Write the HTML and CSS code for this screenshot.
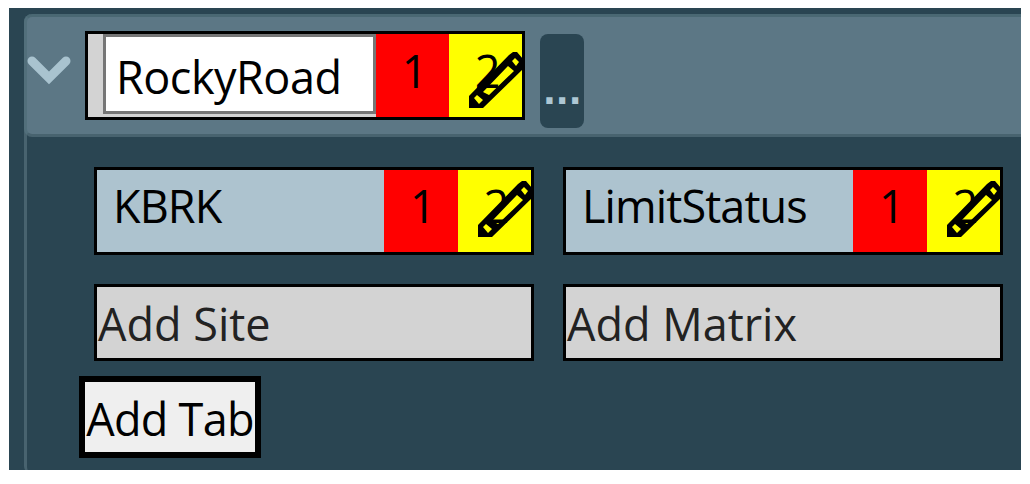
FILE: index.html
```
<!DOCTYPE html>
<html lang="en">
<head>
  <meta charset="UTF-8">
  <title>Tabs</title>
  <link rel="stylesheet" href="styles.css">
</head>
<body>
  <svg class="defs" width="0" height="0">
    <symbol id="pencil" viewBox="0 0 54 57">
      <path fill-rule="evenodd" d="M0 56V44L40 3L44 0H48L54 7V17L14 56Z M5 46L8 43L14 48L10 52Z M14 40L39 14L45 19L20 43Z M43 9L46 6L50 10L47 14Z"/>
    </symbol>
  </svg>

  <main class="app">
    <section class="panel">
      <header class="panel-header">
        <svg class="chevron" viewBox="0 0 44 30"><path d="M5 6L22 23L39 6"/></svg>
        <div class="item tab">
          <input class="name-input" type="text" value="RockyRoad">
          <span class="limit red">1</span>
          <span class="limit yellow">2<svg class="edit"><use href="#pencil"/></svg></span>
        </div>
        <button class="more">...</button>
      </header>

      <div class="items">
        <div class="item">
          <span class="name">KBRK</span>
          <span class="limit red">1</span>
          <span class="limit yellow">2<svg class="edit"><use href="#pencil"/></svg></span>
        </div>
        <div class="item">
          <span class="name">LimitStatus</span>
          <span class="limit red">1</span>
          <span class="limit yellow">2<svg class="edit"><use href="#pencil"/></svg></span>
        </div>
        <button class="add">Add Site</button>
        <button class="add">Add Matrix</button>
      </div>

      <button class="add-tab">Add Tab</button>
    </section>
  </main>
</body>
</html>
```

FILE: styles.css
```
* {
  box-sizing: border-box;
}
body {
  margin: 8px 9px;
  background: #fff;
  font-family: "Open Sans", "Noto Sans", sans-serif;
  font-size: 45px;
  color: #000;
  overflow: hidden;
}
button, input {
  font: inherit;
  margin: 0;
  border-radius: 0;
}
.defs {
  position: absolute;
}
.app {
  height: 462px;
  padding: 6px 0 0 15px;
  background: #2a4552;
  overflow: hidden;
}
.panel {
  height: 460px;
  border-left: 3px solid #48636f;
  border-radius: 8px 0 0 8px;
}
.panel-header {
  display: flex;
  align-items: flex-start;
  height: 123px;
  margin-left: -3px;
  padding: 14px 0 0;
  background: #5c7785;
  border-top: 3px solid #4a6873;
  border-bottom: 3px solid #48636f;
  border-left: 3px solid #526f7b;
  border-radius: 8px 0 0 8px;
}
.chevron {
  width: 44px;
  height: 30px;
  margin: 24px 14px 0 0;
  fill: none;
  stroke: #a9c3cf;
  stroke-width: 9;
  stroke-linecap: round;
}
.item {
  display: flex;
  width: 440px;
  height: 88px;
  border: 3px solid #000;
  background: #adc3cf;
}
.tab {
  height: 89px;
  padding-left: 15px;
  background: #d3d3d3;
}
.name-input {
  width: 273px;
  height: 80px;
  padding: 5px 0 0 10px;
  border: 3px solid #767676;
  background: #fff;
  letter-spacing: -0.5px;
}
.name {
  width: 287px;
  padding-left: 16px;
  line-height: 72px;
  letter-spacing: -0.9px;
}
.limit {
  position: relative;
  flex: 1;
  padding-left: 4px;
  line-height: 72px;
  text-align: center;
}
.tab .limit {
  line-height: 74px;
}
.red {
  background: #f00;
}
.yellow {
  background: #ff0;
}
/* the pencil lies over the number */
.edit {
  position: absolute;
  top: 11px;
  right: -1px;
  width: 54px;
  height: 57px;
  fill: #000;
}
.tab .edit {
  top: 18px;
}
.more {
  width: 44px;
  height: 94px;
  margin: 3px 0 0 15px;
  padding: 21px 0 0;
  border: 0;
  border-radius: 8px;
  background: #2a4552;
  color: #adc7d4;
  font-family: "DejaVu Sans", sans-serif;
  font-size: 35px;
  font-weight: bold;
  letter-spacing: -0.4px;
}
.items {
  display: grid;
  grid-template-columns: 440px 440px;
  column-gap: 29px;
  row-gap: 29px;
  padding: 30px 0 0 67px;
}
.add {
  height: 77px;
  padding: 2px 0 0 1px;
  border: 3px solid #000;
  background: #d3d3d3;
  color: #222;
  text-align: left;
  line-height: 70px;
}
.add-tab {
  display: block;
  width: 182px;
  height: 82px;
  margin: 15px 0 0 52px;
  padding: 2px 0 0;
  border: 6px solid #000;
  background: #efefef;
  color: #000;
  white-space: nowrap;
  letter-spacing: -0.7px;
}
```
